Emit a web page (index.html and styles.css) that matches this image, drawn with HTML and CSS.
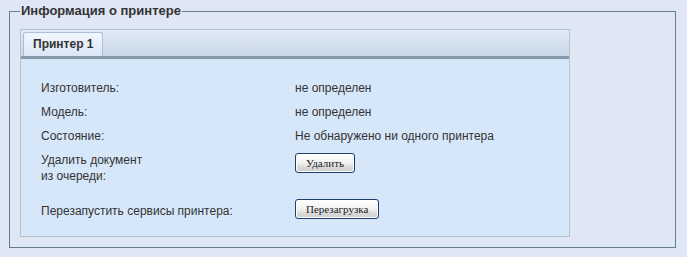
FILE: index.html
```html
<!DOCTYPE html>
<html lang="ru">
<head>
  <meta charset="utf-8" />
  <title>Информация о принтере</title>
  <link rel="stylesheet" href="styles.css">
</head>
<body>
  <fieldset class="printer-info">
    <legend>Информация о принтере</legend>
    <div class="tab-panel">
      <div class="tab-bar">
        <div class="tab active">Принтер 1</div>
      </div>
      <div class="tab-body">
        <div class="row">
          <div class="label">Изготовитель:</div>
          <div class="value">не определен</div>
        </div>
        <div class="row">
          <div class="label">Модель:</div>
          <div class="value">не определен</div>
        </div>
        <div class="row">
          <div class="label">Состояние:</div>
          <div class="value">Не обнаружено ни одного принтера</div>
        </div>
        <div class="row">
          <div class="label">Удалить документ<br>из очереди:</div>
          <div class="value"><button class="btn" type="button">Удалить</button></div>
        </div>
        <div class="row row-last">
          <div class="label label-pad">Перезапустить сервисы принтера:</div>
          <div class="value"><button class="btn" type="button">Перезагрузка</button></div>
        </div>
      </div>
    </div>
  </fieldset>
</body>
</html>
```

FILE: styles.css
```css
* {
  box-sizing: border-box;
}

body {
  margin: 0;
  padding: 3px 11px 8px 9px;
  background-color: #dfe7f5;
  font-family: Tahoma, "Liberation Sans", sans-serif;
  font-size: 12px;
  color: #333;
}

.printer-info {
  margin: 0;
  padding: 10px 10px 10px 10px;
  border: 1px solid #647e8a;
  min-width: 0;
}

.printer-info legend {
  padding: 0 1px;
  margin-left: 0;
  font-weight: bold;
  font-size: 13px;
  color: #333;
  line-height: 16px;
}

.tab-panel {
  width: 550px;
  border: 1px solid #b4c4cc;
}

.tab-bar {
  display: flex;
  padding: 2px 2px 0 2px;
  height: 29px;
  background: linear-gradient(#e3ebf5, #c8d8ea);
  border-bottom: 3px solid #8898a6;
}

.tab {
  padding: 0 9px;
  line-height: 23px;
  height: 24px;
  font-weight: bold;
  color: #333;
  border: 1px solid #a9c0d8;
  border-bottom: none;
  border-radius: 3px 3px 0 0;
  background: linear-gradient(#f1f6fd, #dbe7f6);
}

.tab-body {
  background-color: #d7e7fa;
  padding: 21px 20px 17px 20px;
}

.row {
  display: flex;
  line-height: 16px;
  margin-bottom: 8px;
}

.row-last {
  margin-top: 14px;
  margin-bottom: 0;
}

.label {
  width: 254px;
}

.label-pad {
  padding-top: 5px;
}

.btn {
  height: 20px;
  margin-top: 1px;
  padding: 0 10px;
  font-family: "Liberation Serif", serif;
  font-size: 11px;
  color: #222;
  border: 1px solid #1e3f6e;
  border-radius: 3px;
  background: linear-gradient(#ffffff 0%, #f2f2f2 50%, #d9d9d9 75%, #cfcfcf 100%);
  box-shadow: inset 0 0 0 1px #fff;
}
```
